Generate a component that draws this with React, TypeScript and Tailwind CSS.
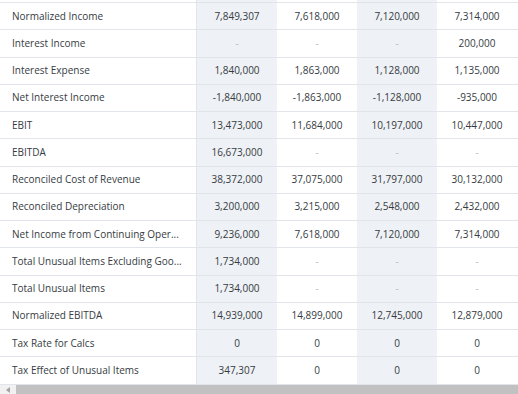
const rows: { label: string; values: string[] }[] = [
  { label: 'Normalized Income', values: ['7,849,307', '7,618,000', '7,120,000', '7,314,000'] },
  { label: 'Interest Income', values: ['-', '-', '-', '200,000'] },
  { label: 'Interest Expense', values: ['1,840,000', '1,863,000', '1,128,000', '1,135,000'] },
  { label: 'Net Interest Income', values: ['-1,840,000', '-1,863,000', '-1,128,000', '-935,000'] },
  { label: 'EBIT', values: ['13,473,000', '11,684,000', '10,197,000', '10,447,000'] },
  { label: 'EBITDA', values: ['16,673,000', '-', '-', '-'] },
  { label: 'Reconciled Cost of Revenue', values: ['38,372,000', '37,075,000', '31,797,000', '30,132,000'] },
  { label: 'Reconciled Depreciation', values: ['3,200,000', '3,215,000', '2,548,000', '2,432,000'] },
  { label: 'Net Income from Continuing Oper...', values: ['9,236,000', '7,618,000', '7,120,000', '7,314,000'] },
  { label: 'Total Unusual Items Excluding Goo...', values: ['1,734,000', '-', '-', '-'] },
  { label: 'Total Unusual Items', values: ['1,734,000', '-', '-', '-'] },
  { label: 'Normalized EBITDA', values: ['14,939,000', '14,899,000', '12,745,000', '12,879,000'] },
  { label: 'Tax Rate for Calcs', values: ['0', '0', '0', '0'] },
  { label: 'Tax Effect of Unusual Items', values: ['347,307', '0', '0', '0'] },
];

const colBg = ['bg-[#eef1f5]', 'bg-white', 'bg-[#eef1f5]', 'bg-white'];

export default function App() {
  return (
    <div className="w-[518px] h-[394px] overflow-hidden bg-white text-[10px] text-[#363b42] flex flex-col" style={{ fontFamily: '"Open Sans", "Liberation Sans", sans-serif' }}>
      {/* tail of the row above, cut off by the scroll */}
      <div className="flex h-[3px] shrink-0 border-b border-[#e1e4e9]">
        <div className="w-[197px] border-r border-[#e1e4e9]" />
        {colBg.map((bg, i) => (
          <div key={i} className={`w-[80px] ${bg}`} />
        ))}
      </div>

      {rows.map(row => (
        <div key={row.label} className="flex h-[27.25px] shrink-0 border-b border-[#e1e4e9]">
          <div className="w-[197px] border-r border-[#e1e4e9] flex items-center pl-3 whitespace-nowrap overflow-hidden">
            {row.label}
          </div>
          {row.values.map((v, i) => (
            <div key={i} className={`w-[80px] flex items-center justify-center ${colBg[i]}`}>
              {v === '-' ? <span className="text-[#b8bcc2]">-</span> : v}
            </div>
          ))}
        </div>
      ))}

      {/* horizontal scrollbar */}
      <div className="mt-auto flex h-[11px] shrink-0 bg-[#f1f1f1]">
        <div className="w-[16px] flex items-center justify-center">
          <div className="w-0 h-0 border-y-[3px] border-y-transparent border-r-[4px] border-r-[#a3a3a3]" />
        </div>
        <div className="flex-1 bg-[#c1c1c1]" />
      </div>
    </div>
  );
}
